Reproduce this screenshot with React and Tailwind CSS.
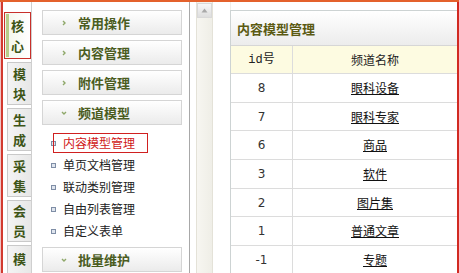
import React from 'react';

const font = { fontFamily: '"Noto Sans CJK SC", "DejaVu Sans", sans-serif' };

// -- left vertical tabs
const tabs = [
  { label: ['核', '心'], active: true, h: 'h-[47px]' },
  { label: ['模', '块'], h: 'h-[43px]' },
  { label: ['生', '成'], h: 'h-[43px]' },
  { label: ['采', '集'], h: 'h-[43px]' },
  { label: ['会', '员'], h: 'h-[42px]' },
  { label: ['模'], h: 'h-[43px]', top: true },
];

const Tab = ({ label, active, h, top }) => (
  <div
    className={
      active
        ? `${h} w-[27px] border border-[#c8302a] bg-gradient-to-r from-[#f3f6ea] to-white flex flex-col items-center justify-center relative shrink-0`
        : `${h} w-[24px] ml-[3px] border border-r-0 border-[#c9c9c9] bg-gradient-to-r from-[#f4f4f4] to-[#e7e7e7] flex flex-col items-center shrink-0 ${top ? 'justify-start pt-[3px]' : 'justify-center'}`
    }
  >
    {active && <div className="absolute left-[1px] top-[1px] bottom-[1px] w-[3px] bg-[#b7cc8a]" />}
    {label.map((c, i) => (
      <span key={i} className="text-[13px] leading-[20px] font-bold text-[#3d5416]">{c}</span>
    ))}
  </div>
);

// -- menu header with chevron
const Header = ({ title, open }) => (
  <div className="h-[25px] border border-[#d5d5d5] bg-gradient-to-b from-white to-[#ebebeb] flex items-center">
    <svg className="ml-[18px] w-[6px] h-[6px]" viewBox="0 0 6 6" fill="none" stroke="#8fa86a" strokeWidth="1.4">
      {open ? <path d="M1 2l2 2 2-2" /> : <path d="M2 1l2 2-2 2" />}
    </svg>
    <span className="ml-[11px] text-[13px] font-bold text-[#4b5d1f] leading-none">{title}</span>
  </div>
);

const Item = ({ text, active }) => (
  <div className="h-[22px] flex items-center relative">
    <span className="ml-[9px] w-[5px] h-[5px] border border-[#7f8ea6] bg-[#dfe5ee]" />
    <span className={`ml-[7px] text-[12px] leading-none ${active ? 'text-[#d01818]' : 'text-[#222]'}`}>{text}</span>
    {active && <div className="absolute left-[11px] top-[1px] w-[95px] h-[20px] border border-[#d02020]" />}
  </div>
);

const rows = [
  ['8', '眼科设备'],
  ['7', '眼科专家'],
  ['6', '商品'],
  ['3', '软件'],
  ['2', '图片集'],
  ['1', '普通文章'],
  ['-1', '专题'],
];

export default function App() {
  return (
    <div style={font} className="w-[459px] h-[273px] overflow-hidden bg-white border-t-2 border-[#e4612c] flex">
      {/* -- left red edge */}
      <div className="w-[3px] border-l border-[#f1c4c4] bg-[#d23a2f] shrink-0" />

      {/* -- tabs column */}
      <div className="w-[29px] border-r border-[#cfcfcf] pt-[10px] pl-[1px] flex flex-col gap-[3px] shrink-0 overflow-hidden">
        {tabs.map((t, i) => (
          <Tab key={i} {...t} />
        ))}
      </div>

      {/* -- menu column */}
      <div className="w-[158px] border-r border-[#a8a8a8] shrink-0 pl-[10px] pr-[7px] pt-[8px]">
        <div className="flex flex-col gap-[5px]">
          <Header title="常用操作" />
          <Header title="内容管理" />
          <Header title="附件管理" />
          <Header title="频道模型" open />
        </div>
        <div className="pt-[7px] pb-[5px]">
          <Item text="内容模型管理" active />
          <Item text="单页文档管理" />
          <Item text="联动类别管理" />
          <Item text="自由列表管理" />
          <Item text="自定义表单" />
        </div>
        <Header title="批量维护" open />
      </div>

      {/* -- scroll strip */}
      <div className="w-[41px] shrink-0 flex pl-[6px]">
        <div className="w-[17px] flex flex-col border-x border-[#e4e2d8] bg-[#f4f3ed]">
          <div className="h-[15px] mt-[1px] border border-[#d9d9d9] bg-gradient-to-b from-[#f7f7f7] to-[#dedede] flex items-center justify-center">
            <svg className="w-[7px] h-[5px]" viewBox="0 0 7 5" fill="#a9a9a9">
              <path d="M3.5 0.5L6.5 4.5H0.5z" />
            </svg>
          </div>
          <div className="flex-1 bg-gradient-to-r from-[#f7f6f1] to-[#efeee7]" />
        </div>
        <div className="w-[14px] ml-[4px] border-r border-[#f0efea]" />
      </div>

      {/* -- right panel */}
      <div className="flex-1 pt-[8px] -ml-[1px]">
        <div className="border-l border-t border-[#cdd3d3] h-full">
          <div className="h-[35px] bg-gradient-to-b from-white to-[#ececec] border-b border-[#d6d6d6] flex items-center pl-[6px]">
            <span className="text-[13px] font-bold text-[#5b5a12] leading-none">内容模型管理</span>
          </div>
          <div className="flex h-[28px] bg-[#fdfbe1] border-b border-[#dcdcdc] text-[12px] text-[#222]">
            <div className="w-[62px] border-r border-[#dcdcdc] flex items-center justify-center" style={{ fontFamily: '"Liberation Mono", "Noto Sans CJK SC", monospace' }}>id号</div>
            <div className="flex-1 flex items-center justify-center">频道名称</div>
          </div>
          {rows.map(([id, name]) => (
            <div key={id} className="flex h-[28.7px] border-b border-[#dcdcdc] text-[12px]">
              <div className="w-[62px] border-r border-[#dcdcdc] flex items-center justify-center text-[#333]" style={{ fontFamily: '"DejaVu Sans", sans-serif' }}>{id}</div>
              <div className="flex-1 flex items-center justify-center">
                <span className="underline text-[#111]">{name}</span>
              </div>
            </div>
          ))}
        </div>
      </div>

      {/* -- right red edge */}
      <div className="w-[2px] bg-[#d12a22] shrink-0" />
    </div>
  );
}
